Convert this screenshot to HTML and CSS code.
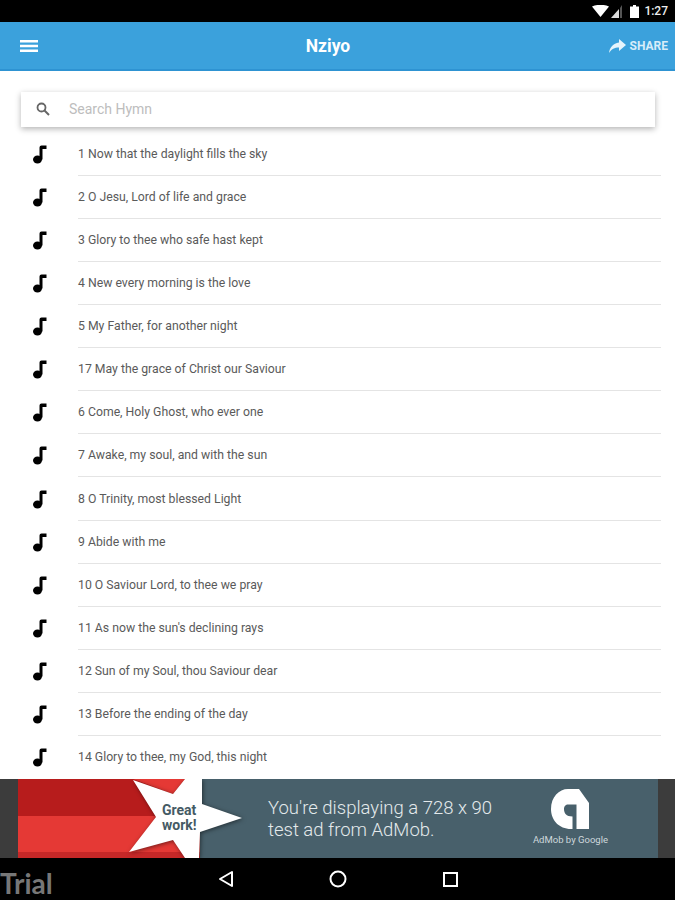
FILE: index.html
```html
<!DOCTYPE html>
<html lang="en">
<head>
  <meta charset="UTF-8" />
  <title>Nziyo</title>
  <link rel="stylesheet" href="styles.css">
</head>
<body>
  <div class="status">
    <svg class="wifi" width="18" height="12" viewBox="0 0 18 12"><path d="M0 1.5Q8.5-2 17 1.5L8.5 12z" fill="#fff"/></svg>
    <svg class="signal" width="12" height="13" viewBox="0 0 12 13"><path d="M0 13L8 4V13z" fill="#ddd"/><path d="M9 3L11 0V13H9z" fill="#555"/></svg>
    <svg class="battery" width="9" height="13" viewBox="0 0 9 13"><path d="M3 0H6V1.5H9V13H0V1.5H3z" fill="#fff"/></svg>
    <span class="clock">1:27</span>
  </div>

  <header class="appbar">
    <svg class="menu" width="18" height="12" viewBox="0 0 18 12"><path d="M0 0H18V2.4H0zM0 4.8H18V7.2H0zM0 9.6H18V12H0z" fill="#fff"/></svg>
    <h1>Nziyo</h1>
    <div class="share">
      <svg width="17" height="14" viewBox="0 0 17 14"><path d="M10 0L17 6L10 12V8.4C5.500 8.400 2.500 10 0 14C.8 8.500 4 4.500 10 3.600z" fill="#e6f4fc"/></svg>
      <span>SHARE</span>
    </div>
  </header>

  <main class="content">
    <div class="search">
      <svg width="14" height="14" viewBox="0 0 14 14"><circle cx="5.500" cy="5.500" r="4" fill="none" stroke="#666" stroke-width="1.800"/><path d="M8.500 8.500L13 13" stroke="#666" stroke-width="2"/></svg>
      <span>Search Hymn</span>
    </div>
    <ul class="hymns" id="hymns"></ul>
  </main>

  <div class="adwrap">
    <div class="ad">
      <div class="ad-red">
        <div class="stripe-dark"></div>
        <div class="stripe-light"></div>
        <div class="stripe-low"></div>
      </div>
      <div class="ad-slate">
        <p>You're displaying a 728 x 90<br>test ad from AdMob.</p>
        <div class="admob">
          <svg width="38" height="40" viewBox="0 0 38 40"><path d="M17 0H28L38 14V40H25.500V15.500H17C14 15.500 13 18 13 20C13 24 15 27.500 21.500 27.500V40H20C8 40 0 31 0 20C0 8 8 0 17 0z" fill="#fff"/></svg>
          <span>AdMob by Google</span>
        </div>
      </div>
      <svg class="star" width="240" height="79" viewBox="0 0 240 79">
        <path d="M115 0L155 15L167 0z" fill="#e53935"/>
        <path class="star-shape" d="M115 1L155 15L167 0H184V25L224 39L182 53L181 79H167L155 61L111 73L138 38z" fill="#fff"/>
      </svg>
      <div class="great">Great<br>work!</div>
    </div>
  </div>

  <nav class="navbar">
    <span class="trial">Trial</span>
    <svg width="16" height="18" viewBox="0 0 16 18"><path d="M14 2V16L2 9z" fill="none" stroke="#fff" stroke-width="2" stroke-linejoin="round"/></svg>
    <svg width="18" height="18" viewBox="0 0 18 18"><circle cx="9" cy="9" r="7.500" fill="none" stroke="#fff" stroke-width="2"/></svg>
    <svg width="16" height="16" viewBox="0 0 16 16"><rect x="2" y="2" width="13" height="13" fill="none" stroke="#fff" stroke-width="2"/></svg>
  </nav>

  <script>
    var titles = [
      '1 Now that the daylight fills the sky',
      '2 O Jesu, Lord of life and grace',
      '3 Glory to thee who safe hast kept',
      '4 New every morning is the love',
      '5 My Father, for another night',
      '17 May the grace of Christ our Saviour',
      '6 Come, Holy Ghost, who ever one',
      '7 Awake, my soul, and with the sun',
      '8 O Trinity, most blessed Light',
      '9 Abide with me',
      "10 O Saviour Lord, to thee we pray",
      "11 As now the sun's declining rays",
      '12 Sun of my Soul, thou Saviour dear',
      '13 Before the ending of the day',
      '14 Glory to thee, my God, this night'
    ];
    var note = '<svg class="note" width="14" height="19" viewBox="0 0 14 19"><ellipse cx="4.500" cy="14.500" rx="4.500" ry="4" fill="#000"/><path d="M6.500 14.500V2.500Q6.500 .5 8.500 .5H13.500V4H9.500V14.500z" fill="#000"/></svg>';
    document.getElementById('hymns').innerHTML = titles.map(function (t) {
      return '<li>' + note + '<span>' + t + '</span></li>';
    }).join('');
  </script>
</body>
</html>
```

FILE: styles.css
```css
* { box-sizing: border-box; }
body { margin: 0; height: 900px; overflow: hidden; display: flex; flex-direction: column; background: #fff; font-family: Roboto, "Liberation Sans", sans-serif; }

.status { height: 22px; background: #000; display: flex; align-items: center; justify-content: flex-end; padding-right: 7px; color: #eee; font-size: 12px; font-weight: 500; }
.signal { margin-left: 1px; }
.battery { margin-left: 7px; }
.clock { margin-left: 5px; }

.appbar { height: 49px; background: #3ba1dc; border-bottom: 2px solid #2e93d2; display: flex; align-items: center; position: relative; color: #fff; padding: 0 7px 0 20px; justify-content: space-between; }
.appbar h1 { position: absolute; left: 0; right: 19px; margin: 0; text-align: center; font-size: 17.500px; font-weight: 700; }
.share { display: flex; align-items: center; gap: 4px; font-size: 12px; font-weight: 700; color: #d8edf9; }

.content { flex: 1; min-height: 0; padding: 21px 20px 0 21px; }
.search { height: 35px; padding-bottom: 1px; background: #fff; box-shadow: 0 2px 6px rgba(0,0,0,0.3); display: flex; align-items: center; padding-left: 15px; gap: 19px; font-size: 14px; color: #bdbdbd; }

.hymns { list-style: none; margin: 6px 0 0; padding: 0; }
.hymns li { height: 43.070px; display: flex; align-items: center; padding-left: 12px; }
.hymns .note { flex: none; margin-left: 0; margin-right: -1px; }
.hymns span { flex: 1; margin-left: 32px; margin-right: -6px; height: 43px; line-height: 43px; font-size: 12.250px; color: #5a5a5a; border-bottom: 1px solid #e4e4e4; padding-bottom: 1px; }
.hymns li:last-child span { border-bottom: none; }

.adwrap { height: 79px; background: #3c3c3c; padding: 0 17px 0 18px; }
.ad { height: 79px; display: flex; position: relative; overflow: hidden; }
.ad-red { width: 182px; display: flex; flex-direction: column; }
.stripe-dark { height: 37px; background: #b71c1c; }
.stripe-light { height: 36px; background: #e53935; }
.stripe-low { flex: 1; background: #c62828; }
.ad-slate { flex: 1; background: #48606b; display: flex; align-items: center; justify-content: space-between; padding: 0 50px 0 68px; color: #e4eaec; }
.ad-slate p { margin: 0; font-size: 18.500px; line-height: 22px; font-weight: 300; }
.admob { display: flex; flex-direction: column; align-items: center; gap: 5px; margin-top: -3px; font-size: 9.500px; color: #cfd8dc; }
.star { position: absolute; left: 0; top: 0; }
.star-shape { filter: drop-shadow(1px 1px 2px rgba(0,0,0,0.5)); }
.great { position: absolute; left: 144px; top: 24px; font-size: 14px; line-height: 15px; font-weight: 700; color: #455a64; }

.navbar { height: 42px; background: #000; display: flex; align-items: center; position: relative; padding-left: 218px; gap: 95px; }
.trial { position: absolute; left: 0; bottom: 0; font-size: 28px; font-weight: 700; color: #777; font-family: Lato, sans-serif; }
```
